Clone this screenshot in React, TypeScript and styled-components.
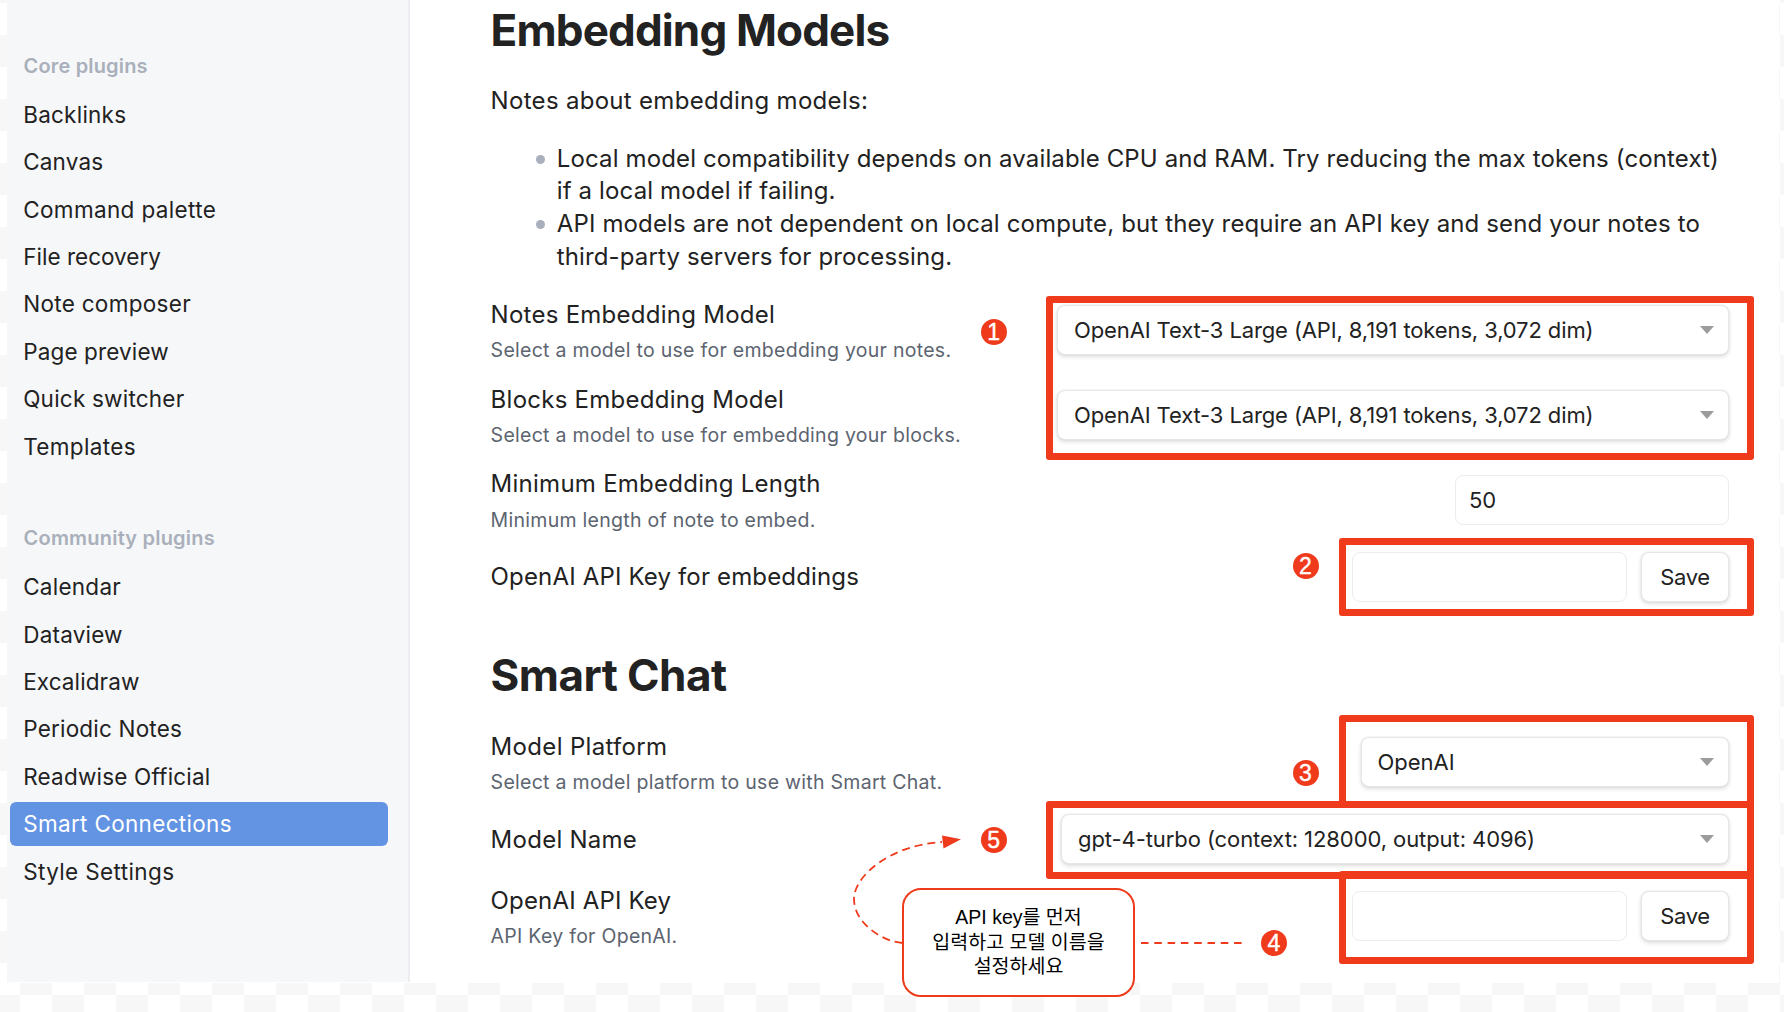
import React from 'react';
import styled, { createGlobalStyle } from 'styled-components';

const RED = '#ef3a1b';

const Global = createGlobalStyle`
  * { box-sizing: border-box; }
  body {
    margin: 0;
    background: #fff;
    color: #222;
    font-family: Inter, "Noto Sans CJK KR", sans-serif;
    overflow: hidden;
  }
`;

const Page = styled.div`
  position: relative;
  width: 1784px;
  height: 1012px;
  padding: 0 5px 29px 7px;
  overflow: hidden;
  background: conic-gradient(#fff 25%, #f7f7f7 0 50%, #fff 0 75%, #f7f7f7 0) -12px -29px / 64px 64px;
`;

const Window = styled.div`
  display: flex;
  height: 983px;
  background: #fff;
`;

const Sidebar = styled.nav`
  width: 403px;
  height: 981.5px;
  padding: 50.7px 20px 0 3px;
  border-right: 2px solid #ebedf0;
  background: #f6f7f9;
`;

const Group = styled.section`
  display: flex;
  flex-direction: column;
  gap: 3.4px;
  margin-bottom: 54.6px;
`;

const GroupTitle = styled.h2<{ $track: number }>`
  margin: 0 0 8.7px;
  padding-left: 13.6px;
  color: #a9b0bb;
  font-size: 20px;
  font-weight: 600;
  line-height: 30px;
  letter-spacing: ${(p) => p.$track}px;
`;

const NavItem = styled.a<{ $active?: boolean; $track: number }>`
  height: 44px;
  width: 378px;
  padding-left: 13.2px;
  border-radius: 6px;
  background: ${(p) => (p.$active ? '#6393e3' : 'transparent')};
  color: ${(p) => (p.$active ? '#fff' : '#222')};
  font-size: 22.5px;
  line-height: 44px;
  letter-spacing: ${(p) => p.$track}px;
`;

const Main = styled.main`
  flex: 1;
  padding: 5.4px 50px 0 80.6px;
`;

const Title = styled.h1<{ $top?: number; $bottom: number; $track?: number }>`
  margin: ${(p) => p.$top ?? 0}px 0 ${(p) => p.$bottom}px;
  font-size: 44px;
  font-weight: 700;
  line-height: 50px;
  letter-spacing: ${(p) => p.$track ?? 0}px;
`;

const Lead = styled.p`
  margin: 0;
  font-size: 24px;
  line-height: 32.7px;
  letter-spacing: 0.3px;
`;

const NoteList = styled.ul`
  margin: 24.8px 0 15.8px;
  padding: 0;
  list-style: none;
`;

const Note = styled.li`
  display: flex;
  padding-left: 45.2px;
  font-size: 24px;
  line-height: 32.7px;
  letter-spacing: 0.13px;
  white-space: nowrap;

  &::before {
    content: '';
    width: 9px;
    height: 9px;
    margin: 12.4px 12px 0 0;
    border-radius: 50%;
    background: #a9b0bb;
  }
`;

const Row = styled.div<{ $height: number }>`
  display: flex;
  align-items: center;
  justify-content: space-between;
  height: ${(p) => p.$height}px;
`;

const Info = styled.div`
  display: flex;
  flex-direction: column;
  gap: 7.4px;
`;

const Name = styled.div<{ $track: number }>`
  font-size: 24px;
  line-height: 30px;
  letter-spacing: ${(p) => p.$track}px;
`;

const Desc = styled.div`
  color: #5c6470;
  font-size: 19.5px;
  font-weight: 430;
  line-height: 26px;
  letter-spacing: 0.28px;
`;

const Controls = styled.div<{ $lift: number }>`
  display: flex;
  gap: 14px;
  margin-bottom: ${(p) => p.$lift}px;
`;

const raised = `
  border: 1.5px solid #e6e6e6;
  border-radius: 8px;
  background: #fff;
  box-shadow: 0 2px 4px rgba(0, 0, 0, 0.13), 0 0 2px rgba(0, 0, 0, 0.08);
`;

const Dropdown = styled.div<{ $width: number; $track?: number }>`
  ${raised}
  display: flex;
  align-items: center;
  justify-content: space-between;
  width: ${(p) => p.$width}px;
  height: 50px;
  padding: 0 14px 0 16px;
  font-size: 22px;
  letter-spacing: ${(p) => p.$track ?? 0}px;

  &::after {
    content: '';
    border: solid transparent;
    border-width: 8px 7px 0;
    border-top-color: #9c9c9c;
  }
`;

const Field = styled.div<{ $width: number }>`
  display: flex;
  align-items: center;
  width: ${(p) => p.$width}px;
  height: 50px;
  padding-left: 13.5px;
  border: 1.5px solid #ececee;
  border-radius: 8px;
  font-size: 22px;
`;

const SaveButton = styled.button`
  ${raised}
  width: 88px;
  height: 50px;
  padding: 0;
  color: #222;
  font: 22px Inter, sans-serif;
  letter-spacing: -0.4px;
`;

const Highlight = styled.div<{ $x: number; $y: number; $w: number; $h: number }>`
  position: absolute;
  left: ${(p) => p.$x}px;
  top: ${(p) => p.$y}px;
  width: ${(p) => p.$w}px;
  height: ${(p) => p.$h}px;
  border: 7.5px solid ${RED};
  border-radius: 3px;
`;

const Badge = styled.span<{ $x: number; $y: number }>`
  position: absolute;
  left: ${(p) => p.$x - 13}px;
  top: ${(p) => p.$y - 13}px;
  width: 26px;
  height: 26px;
  border-radius: 50%;
  background: ${RED};
  color: #fff;
  font: 23px/26px "Liberation Sans", sans-serif;
  -webkit-text-stroke: 0.4px #fff;
  text-align: center;
`;

const Connector = styled.svg`
  position: absolute;
  left: 840px;
  top: 820px;
`;

const Callout = styled.div`
  position: absolute;
  left: 902px;
  top: 888px;
  width: 233px;
  height: 109px;
  padding-top: 15.4px;
  border: 2px solid ${RED};
  border-radius: 19px;
  background: #fff;
  color: #000;
  font: 19.5px/24.5px "Liberation Sans", "Noto Sans CJK KR", sans-serif;
  text-align: center;
  white-space: nowrap;
`;

type Entry = [label: string, track: number];

const core: Entry[] = [
  ['Backlinks', 0.24], ['Canvas', 0.16], ['Command palette', 0.36], ['File recovery', 0.02],
  ['Note composer', 0.3], ['Page preview', 0.13], ['Quick switcher', 0.22], ['Templates', 0.35],
];
const community: Entry[] = [
  ['Calendar', 0.25], ['Dataview', 0.2], ['Excalidraw', 0.1], ['Periodic Notes', 0.2],
  ['Readwise Official', 0.2], ['Smart Connections', 0.32], ['Style Settings', 0.37],
];

function NavGroup({ title, track, items, active }: { title: string; track: number; items: Entry[]; active?: string }) {
  return (
    <Group>
      <GroupTitle $track={track}>{title}</GroupTitle>
      {items.map(([label, t]) => (
        <NavItem key={label} $track={t} $active={label === active}>{label}</NavItem>
      ))}
    </Group>
  );
}

interface SettingProps {
  name: string;
  desc?: string;
  height?: number;
  track?: number;
  lift?: number;
  children: React.ReactNode;
}

function Setting({ name, desc, height = 84.7, track = 0.26, lift = 3, children }: SettingProps) {
  return (
    <Row $height={height}>
      <Info>
        <Name $track={track}>{name}</Name>
        {desc && <Desc>{desc}</Desc>}
      </Info>
      <Controls $lift={lift}>{children}</Controls>
    </Row>
  );
}

const embedModel = 'OpenAI Text-3 Large (API, 8,191 tokens, 3,072 dim)';

export default function App() {
  return (
    <Page>
      <Global />
      <Window>
        <Sidebar>
          <NavGroup title="Core plugins" track={0.16} items={core} />
          <NavGroup title="Community plugins" track={0.2} items={community} active="Smart Connections" />
        </Sidebar>
        <Main>
          <Title $bottom={29.8} $track={-0.85}>Embedding Models</Title>
          <Lead>Notes about embedding models:</Lead>
          <NoteList>
            <Note>
              <span>
                Local model compatibility depends on available CPU and RAM. Try reducing the max tokens (context)
                <br />
                if a local model if failing.
              </span>
            </Note>
            <Note>
              <span>
                API models are not dependent on local compute, but they require an API key and send your notes to
                <br />
                third-party servers for processing.
              </span>
            </Note>
          </NoteList>
          <Setting name="Notes Embedding Model" desc="Select a model to use for embedding your notes.">
            <Dropdown $width={672} $track={-0.12}>{embedModel}</Dropdown>
          </Setting>
          <Setting name="Blocks Embedding Model" desc="Select a model to use for embedding your blocks.">
            <Dropdown $width={672} $track={-0.12}>{embedModel}</Dropdown>
          </Setting>
          <Setting name="Minimum Embedding Length" desc="Minimum length of note to embed.">
            <Field $width={274.5}>50</Field>
          </Setting>
          <Setting name="OpenAI API Key for embeddings" height={67.4} track={0.16} lift={1}>
            <Field $width={275} />
            <SaveButton>Save</SaveButton>
          </Setting>
          <Title $top={39.4} $bottom={21} $track={-0.55}>Smart Chat</Title>
          <Setting name="Model Platform" desc="Select a model platform to use with Smart Chat." track={0.33}>
            <Dropdown $width={368.5}>OpenAI</Dropdown>
          </Setting>
          <Setting name="Model Name" height={68.2} lift={2}>
            <Dropdown $width={668} $track={-0.08}>gpt-4-turbo (context: 128000, output: 4096)</Dropdown>
          </Setting>
          <Setting name="OpenAI API Key" desc="API Key for OpenAI." height={86.9} track={0.16}>
            <Field $width={275} />
            <SaveButton>Save</SaveButton>
          </Setting>
        </Main>
      </Window>

      <Highlight $x={1046} $y={296.3} $w={708} $h={163.5} />
      <Highlight $x={1339} $y={537.5} $w={415} $h={78} />
      <Highlight $x={1339} $y={715} $w={415} $h={93} />
      <Highlight $x={1339} $y={871} $w={415} $h={93} />
      <Highlight $x={1046} $y={800.7} $w={708} $h={78} />

      <Badge $x={993.6} $y={332}>1</Badge>
      <Badge $x={1305.5} $y={566}>2</Badge>
      <Badge $x={1305.5} $y={773.3}>3</Badge>
      <Badge $x={1273.8} $y={943.3}>4</Badge>
      <Badge $x={993.6} $y={840}>5</Badge>

      <Connector width="410" height="140" fill="none">
        <path
          d="M62.5 123 C44 122 14 104 14 79 C14 56 50 25 102 22"
          stroke={RED}
          strokeWidth="1.8"
          strokeDasharray="8 5"
        />
        <path d="M102 15.5 L121 19.3 L103.5 28.5 Z" fill={RED} />
        <path d="M301 123 H402" stroke={RED} strokeWidth="1.8" strokeDasharray="7.5 5.8" />
      </Connector>
      <Callout>
        API key를 먼저
        <br />
        입력하고 모델 이름을
        <br />
        설정하세요
      </Callout>
    </Page>
  );
}
